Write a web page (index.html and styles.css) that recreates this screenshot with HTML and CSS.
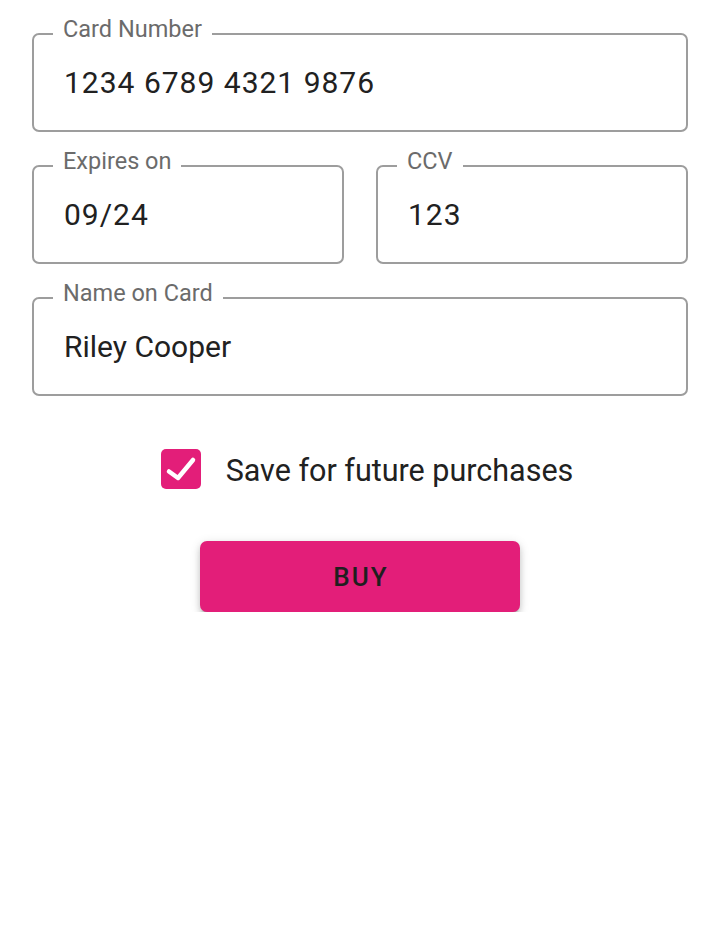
FILE: index.html
```html
<!DOCTYPE html>
<html lang="en">
<head>
<meta charset="utf-8">
<title>Payment</title>
<link rel="stylesheet" href="styles.css">
</head>
<body>
<form class="form">
  <div class="fields">
    <div class="field">
      <label class="lbl" for="num">Card Number</label>
      <input class="val num" id="num" value="1234 6789 4321 9876" readonly>
    </div>
    <div class="pair">
      <div class="field">
        <label class="lbl" for="exp">Expires on</label>
        <input class="val num" id="exp" value="09/24" readonly>
      </div>
      <div class="field">
        <label class="lbl" for="ccv">CCV</label>
        <input class="val num" id="ccv" value="123" readonly>
      </div>
    </div>
    <div class="field">
      <label class="lbl" for="name">Name on Card</label>
      <input class="val" id="name" value="Riley Cooper" readonly>
    </div>
  </div>
  <label class="save">
    <span class="box">
      <svg width="40" height="40" viewBox="0 0 40 40" aria-hidden="true">
        <rect x="0" y="0" width="40" height="40" rx="5" fill="#e31e79"/>
        <polyline points="8,22.5 17,29 32,11" fill="none" stroke="#fff" stroke-width="4.5" stroke-linecap="round" stroke-linejoin="round"/>
      </svg>
    </span>
    <span class="save-text">Save for future purchases</span>
  </label>
  <button type="button" class="buy">BUY</button>
</form>
</body>
</html>
```

FILE: styles.css
```css
html, body {
  margin: 0;
  padding: 0;
  background: #fff;
}

body {
  font-family: Roboto, "Noto Sans", Arial, sans-serif;
  color: #212121;
}

.form {
  display: flex;
  flex-direction: column;
  padding: 33px 32px 0;
}

.fields {
  display: flex;
  flex-direction: column;
  gap: 33px;
}

.pair {
  display: grid;
  grid-template-columns: minmax(0, 1fr) minmax(0, 1fr);
  gap: 32px;
}

.field {
  position: relative;
  box-sizing: border-box;
  height: 99px;
  min-width: 0;
  border: 2px solid #9d9d9d;
  border-radius: 7px;
  display: flex;
  align-items: center;
  padding: 0 20px 0 30px;
}

.lbl {
  position: absolute;
  left: 19px;
  top: -20px;
  padding: 0 10px;
  background: #fff;
  font-size: 23.5px;
  line-height: 28px;
  color: #6b6b6b;
  white-space: nowrap;
}

.val {
  flex: 1;
  width: 0;
  min-width: 0;
  border: 0;
  outline: none;
  padding: 0;
  margin: 0;
  background: transparent;
  font: inherit;
  font-size: 30px;
  line-height: 40px;
  color: #212121;
}

.val.num {
  letter-spacing: 1px;
}

.save {
  margin-top: 53px;
  align-self: center;
  display: flex;
  align-items: center;
  gap: 25px;
  height: 40px;
  padding-left: 14px;
}

.box {
  display: flex;
  width: 40px;
  height: 40px;
}

.save-text {
  font-size: 30.5px;
  line-height: 40px;
  color: #212121;
  padding-top: 3px;
}

.buy {
  margin-top: 52px;
  align-self: center;
  width: 320px;
  height: 71px;
  border: 0;
  border-radius: 7px;
  background: #e31e79;
  color: #1f1f1f;
  font-family: Roboto, "Noto Sans", Arial, sans-serif;
  font-weight: 500;
  font-size: 26px;
  letter-spacing: 2px;
  padding: 0 0 0 2px;
  box-shadow: 0 5px 3px -3px rgba(0,0,0,0.25), 0 4px 6px 0 rgba(0,0,0,0.16), 0 2px 11px 0 rgba(0,0,0,0.12);
  cursor: pointer;
}
```
